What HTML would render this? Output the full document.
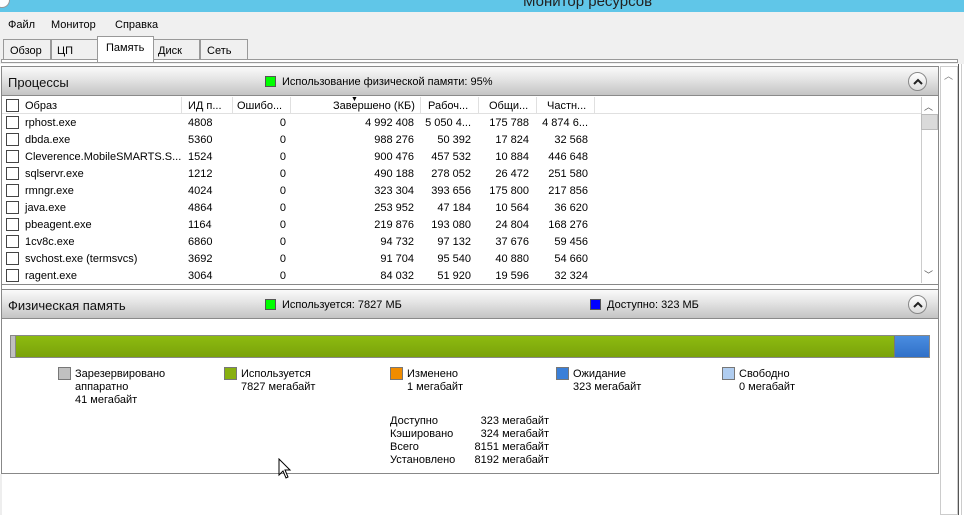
<!DOCTYPE html>
<html><head><meta charset="utf-8"><style>
*{margin:0;padding:0;box-sizing:border-box}
body{width:964px;height:515px;overflow:hidden;background:#fff;font-family:"Liberation Sans","DejaVu Sans",sans-serif;font-size:11px;color:#000;position:relative}
.a{position:absolute;white-space:nowrap}
.hdr{position:absolute;left:2px;width:936px;height:30px;background:linear-gradient(#fafafa,#e6e6e6 40%,#c4c4c4);border-bottom:1px solid #8a8a8a;border-top:1px solid #8a8a8a}
.hdr .t{position:absolute;left:6px;top:8px;font-size:13px;color:#111}
.circ{position:absolute;width:19px;height:19px;border:1px solid #888;border-radius:50%;background:linear-gradient(#fff,#ddd)}
.circ svg{position:absolute;left:4px;top:5px}
.gsq{position:absolute;width:11px;height:11px;border:1px solid #555}
.cb{position:absolute;left:6px;width:13px;height:13px;border:1px solid #444;background:#fff}
.r{text-align:right}
.lg{position:absolute;width:13px;height:13px;border:1px solid #777}
</style></head><body>
<div class="a" style="left:0;top:0;width:964px;height:12px;background:#60c6e8"></div>
<div class="a" style="left:-6px;top:-8px;width:16px;height:16px;border-radius:50%;background:#fff;border:1px solid #999"></div>
<div class="a" style="left:523px;top:-7px;font-size:15px;color:#222">Монитор ресурсов</div>
<div class="a" style="left:0;top:12px;width:964px;height:52px;background:#f0f0f0"></div>
<div class="a" style="left:8px;top:19px">Файл</div>
<div class="a" style="left:51px;top:19px">Монитор</div>
<div class="a" style="left:115px;top:19px">Справка</div>
<div class="a" style="left:3px;top:39px;width:48px;height:20px;border:1px solid #999;border-bottom:none;background:#f0f0f0;padding:5px 0 0 6px">Обзор</div>
<div class="a" style="left:51px;top:39px;width:47px;height:20px;border:1px solid #999;border-bottom:none;background:#f0f0f0;padding:5px 0 0 5px">ЦП</div>
<div class="a" style="left:153px;top:39px;width:47px;height:20px;border:1px solid #999;border-bottom:none;background:#f0f0f0;padding:5px 0 0 4px">Диск</div>
<div class="a" style="left:200px;top:39px;width:48px;height:20px;border:1px solid #999;border-bottom:none;background:#f0f0f0;padding:5px 0 0 6px">Сеть</div>
<div class="a" style="left:1px;top:59px;width:957px;height:4px;border:1px solid #999;background:#fff"></div>
<div class="a" style="left:97px;top:36px;width:57px;height:26px;border:1px solid #999;border-bottom:none;background:#fff;padding:5px 0 0 8px">Память</div>
<div class="a" style="left:1px;top:66px;width:938px;height:408px;border:1px solid #888;border-top:none"></div>
<div class="a" style="left:940px;top:66px;width:18px;height:449px;border:1px solid #ccc;background:#fff"></div>
<div class="a" style="left:944px;top:69px;font-size:9px;color:#777">︿</div>
<div class="a" style="left:958px;top:64px;width:1px;height:451px;background:#555"></div>
<div class="a" style="left:961px;top:64px;width:1px;height:451px;background:#ccc"></div>
<div class="a" style="left:0;top:474px;width:2px;height:41px;background:#eee"></div>
<div class="hdr" style="top:66px"><div class="t">Процессы</div>
<div class="gsq" style="left:263px;top:9px;background:#00ff00"></div>
<div class="a" style="left:280px;top:9px">Использование физической памяти: 95%</div>
<div class="circ" style="left:906px;top:5px"><svg width="10" height="8"><path d="M1 6 L5 2 L9 6" stroke="#222" stroke-width="2" fill="none"/></svg></div></div>
<div class="a" style="left:2px;top:97px;width:919px;height:17px;border-bottom:1px solid #e0e0e0;background:#fff"></div>
<div class="cb" style="top:99px"></div>
<div class="a" style="left:25px;top:100px">Образ</div>
<div class="a" style="left:181px;top:97px;width:1px;height:16px;background:#e0e0e0"></div>
<div class="a" style="left:188px;top:100px">ИД п...</div>
<div class="a" style="left:232px;top:97px;width:1px;height:16px;background:#e0e0e0"></div>
<div class="a" style="left:237px;top:100px">Ошибо...</div>
<div class="a" style="left:290px;top:97px;width:1px;height:16px;background:#e0e0e0"></div>
<div class="a" style="left:333px;top:100px">Завершено (КБ)</div>
<div class="a" style="left:351px;top:96px;font-size:7px">▼</div>
<div class="a" style="left:420px;top:97px;width:1px;height:16px;background:#e0e0e0"></div>
<div class="a" style="left:428px;top:100px">Рабоч...</div>
<div class="a" style="left:478px;top:97px;width:1px;height:16px;background:#e0e0e0"></div>
<div class="a" style="left:489px;top:100px">Общи...</div>
<div class="a" style="left:536px;top:97px;width:1px;height:16px;background:#e0e0e0"></div>
<div class="a" style="left:547px;top:100px">Частн...</div>
<div class="a" style="left:594px;top:97px;width:1px;height:16px;background:#e0e0e0"></div>
<div class="a" style="left:921px;top:97px;width:17px;height:186px;border-left:1px solid #ccc;background:#fff"></div>
<div class="a" style="left:924px;top:100px;font-size:9px;color:#555">︿</div>
<div class="a" style="left:921px;top:114px;width:17px;height:16px;background:#dadada;border:1px solid #bbb"></div>
<div class="a" style="left:924px;top:268px;font-size:9px;color:#555">﹀</div>
<div id="rows"></div>
<div class="a" style="left:2px;top:284px;width:936px;height:1px;background:#888"></div>
<div class="hdr" style="top:289px"><div class="t">Физическая память</div>
<div class="gsq" style="left:263px;top:9px;background:#00ff00"></div>
<div class="a" style="left:280px;top:9px">Используется: 7827 МБ</div>
<div class="gsq" style="left:588px;top:9px;background:#0000ff"></div>
<div class="a" style="left:605px;top:9px">Доступно: 323 МБ</div>
<div class="circ" style="left:906px;top:5px"><svg width="10" height="8"><path d="M1 6 L5 2 L9 6" stroke="#222" stroke-width="2" fill="none"/></svg></div></div>
<div class="a" style="left:10px;top:335px;width:920px;height:23px;border:1px solid #888;background:linear-gradient(#8dbb10,#7aa20a);overflow:hidden">
<div class="a" style="left:0;top:0;width:5px;height:21px;background:#c0c0c0;border-right:1px solid #888"></div>
<div class="a" style="left:883px;top:0;width:36px;height:21px;background:linear-gradient(#4a8de0,#3070c8);border-left:1px solid #777"></div></div>
<div class="lg" style="left:58px;top:367px;background:#c0c0c0"></div>
<div class="a" style="left:75px;top:368px;line-height:13px">Зарезервировано<br>аппаратно<br>41 мегабайт</div>
<div class="lg" style="left:224px;top:367px;background:#88b010"></div>
<div class="a" style="left:241px;top:368px;line-height:13px">Используется<br>7827 мегабайт</div>
<div class="lg" style="left:390px;top:367px;background:#f08c00"></div>
<div class="a" style="left:407px;top:368px;line-height:13px">Изменено<br>1 мегабайт</div>
<div class="lg" style="left:556px;top:367px;background:#3a7fd8"></div>
<div class="a" style="left:573px;top:368px;line-height:13px">Ожидание<br>323 мегабайт</div>
<div class="lg" style="left:722px;top:367px;background:#b0cdf0"></div>
<div class="a" style="left:739px;top:368px;line-height:13px">Свободно<br>0 мегабайт</div>
<div class="a" style="left:390px;top:415px;line-height:13px">Доступно<br>Кэшировано<br>Всего<br>Установлено</div>
<div class="a r" style="left:460px;top:415px;width:89px;line-height:13px">323 мегабайт<br>324 мегабайт<br>8151 мегабайт<br>8192 мегабайт</div>
<svg class="a" style="left:278px;top:458px" width="14" height="22"><path d="M1 1 L1 17 L5 13 L8 20 L10 19 L7 12 L12 12 Z" fill="#fff" stroke="#000" stroke-width="1"/></svg>
<script>
var d=[["rphost.exe","4808","4 992 408","5 050 4...","175 788","4 874 6..."],["dbda.exe","5360","988 276","50 392","17 824","32 568"],["Cleverence.MobileSMARTS.S...","1524","900 476","457 532","10 884","446 648"],["sqlservr.exe","1212","490 188","278 052","26 472","251 580"],["rmngr.exe","4024","323 304","393 656","175 800","217 856"],["java.exe","4864","253 952","47 184","10 564","36 620"],["pbeagent.exe","1164","219 876","193 080","24 804","168 276"],["1cv8c.exe","6860","94 732","97 132","37 676","59 456"],["svchost.exe (termsvcs)","3692","91 704","95 540","40 880","54 660"],["ragent.exe","3064","84 032","51 920","19 596","32 324"]];
var h="";d.forEach(function(r,i){var t=114+i*17,y=t+3;h+='<div class="cb" style="top:'+(t+2)+'px"></div><div class="a" style="left:25px;top:'+y+'px">'+r[0]+'</div><div class="a" style="left:188px;top:'+y+'px">'+r[1]+'</div><div class="a r" style="left:240px;width:46px;top:'+y+'px">0</div><div class="a r" style="left:300px;width:114px;top:'+y+'px">'+r[2]+'</div><div class="a r" style="left:420px;width:51px;top:'+y+'px">'+r[3]+'</div><div class="a r" style="left:478px;width:51px;top:'+y+'px">'+r[4]+'</div><div class="a r" style="left:536px;width:52px;top:'+y+'px">'+r[5]+'</div>';});
document.getElementById("rows").outerHTML=h;
</script>
</body></html>
